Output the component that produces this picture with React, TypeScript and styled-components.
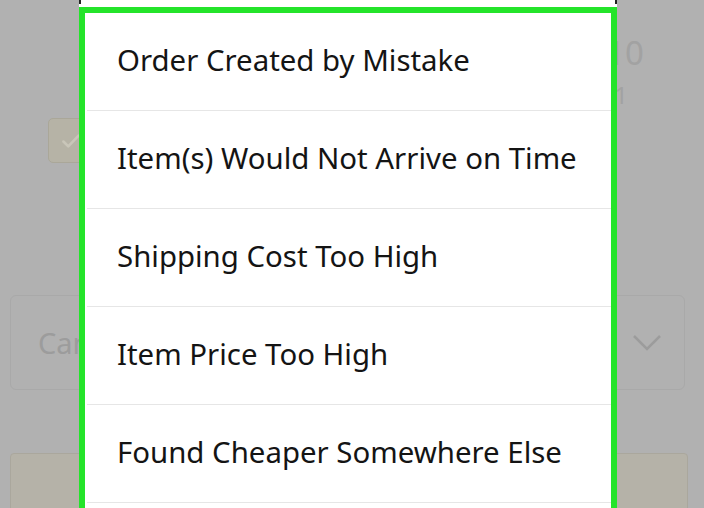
import { FC } from "react";
import styled, { createGlobalStyle } from "styled-components";

const reasons = [
  "Order Created by Mistake",
  "Item(s) Would Not Arrive on Time",
  "Shipping Cost Too High",
  "Item Price Too High",
  "Found Cheaper Somewhere Else",
  "Need to Change Shipping Address",
];

const GlobalStyle = createGlobalStyle`
  html, body {
    margin: 0;
    padding: 0;
    background: #b1b1b1;
    font-family: "Noto Sans", "Open Sans", sans-serif;
    overflow: hidden;
  }
`;

const App: FC = () => {
  return (
    <Screen>
      <GlobalStyle />
      <Backdrop>
        <ItemRow>
          <CheckBox>
            <svg width="26" height="26" viewBox="0 0 24 24" fill="none">
              <path d="M5 12.5l4.5 4.5L19 7" stroke="#c9c6b9" strokeWidth="2.4" strokeLinecap="round" strokeLinejoin="round" />
            </svg>
          </CheckBox>
          <PriceBlock>
            <Price>$12.10</Price>
            <Qty>Qty: 1</Qty>
          </PriceBlock>
        </ItemRow>

        <Select>
          <SelectLabel>Cancellation reason</SelectLabel>
          <svg width="30" height="18" viewBox="0 0 30 18" fill="none">
            <path d="M2 2l13 13L28 2" stroke="#9c9c9c" strokeWidth="2.5" />
          </svg>
        </Select>

        <SubmitButton>Request Cancellation</SubmitButton>
      </Backdrop>

      <Modal>
        <TopStrip />
        <Frame>
          {reasons.map((r) => (
            <Option key={r}>{r}</Option>
          ))}
        </Frame>
      </Modal>
    </Screen>
  );
};

export default App;

const Screen = styled.div`
  position: relative;
  width: 704px;
  height: 508px;
  overflow: hidden;
  background: #b1b1b1;
`;

const Backdrop = styled.div`
  display: flex;
  flex-direction: column;
`;

const ItemRow = styled.div`
  display: flex;
  justify-content: space-between;
  align-items: flex-start;
  padding: 34px 60px 0 48px;
  height: 295px;
  box-sizing: border-box;
`;

const CheckBox = styled.div`
  margin-top: 84px;
  width: 45px;
  height: 45px;
  box-sizing: border-box;
  border: 1px solid #aaa799;
  border-radius: 5px;
  background: #b6b3a6;
  display: flex;
  align-items: center;
  justify-content: center;
`;

const PriceBlock = styled.div`
  display: flex;
  flex-direction: column;
  align-items: flex-end;
  color: #a2a2a2;
`;

const Price = styled.div`
  font-size: 33px;
  line-height: 38px;
`;

const Qty = styled.div`
  font-size: 24px;
  line-height: 34px;
  margin-top: 6px;
  margin-right: 16px;
`;

const Select = styled.div`
  margin: 0 19px 0 10px;
  height: 95px;
  box-sizing: border-box;
  border: 1px solid #a9a9a9;
  border-radius: 6px;
  display: flex;
  align-items: center;
  justify-content: space-between;
  padding: 0 22px 0 27px;
  color: #9c9c9c;
`;

const SelectLabel = styled.span`
  font-size: 29px;
`;

const SubmitButton = styled.div`
  margin: 63px 16px 0 10px;
  height: 80px;
  box-sizing: border-box;
  border: 1px solid #aaa79d;
  border-radius: 4px;
  background: #b5b2a8;
  display: flex;
  align-items: center;
  justify-content: center;
  color: #a0a0a0;
  font-size: 26px;
`;

const Modal = styled.div`
  position: absolute;
  top: 0;
  left: 79px;
  width: 538px;
  background: #fff;
`;

const TopStrip = styled.div`
  height: 4px;
  margin-bottom: 3px;
  background: #fff;
  border-left: 2px solid #222;
  border-right: 2px solid #222;
  box-sizing: border-box;
`;

const Frame = styled.div`
  border: 6px solid #24e42a;
  display: flex;
  flex-direction: column;
`;

const Option = styled.div`
  height: 93px;
  padding: 0 0 4px 30px;
  border-bottom: 1px solid #e6e6e6;
  margin-left: 2px;
  display: flex;
  align-items: center;
  font-size: 29.4px;
  line-height: 34px;
  color: #141414;
`;
